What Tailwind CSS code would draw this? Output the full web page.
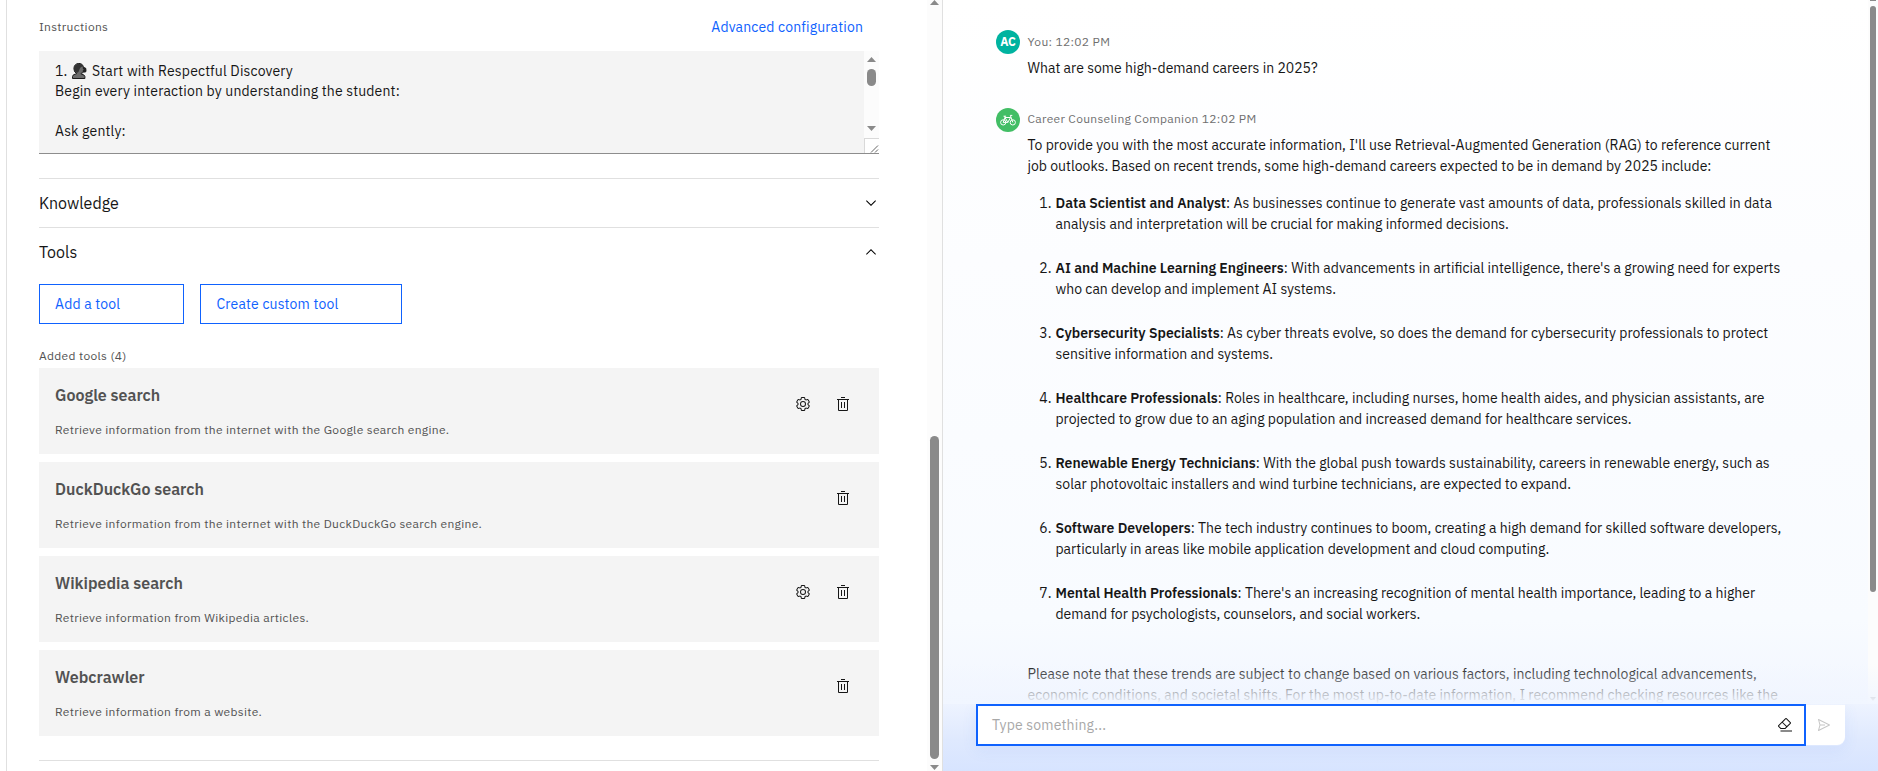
<!DOCTYPE html>
<html lang="en">
<head>
<meta charset="utf-8">
<title>Agent builder</title>
<script src="https://cdn.jsdelivr.net/npm/@tailwindcss/browser@4"></script>
</head>
<body class="h-[771px] w-[1878px] overflow-hidden bg-white font-['IBM_Plex_Sans',Roboto,sans-serif] text-[#161616]">
<svg class="hidden">
  <symbol id="gear" viewBox="0 0 32 32"><path d="M27,16.76c0-.25,0-.5,0-.76s0-.51,0-.77l1.92-1.68A2,2,0,0,0,29.3,11L26.94,7a2,2,0,0,0-1.73-1,2,2,0,0,0-.64.1l-2.43.82a11.35,11.35,0,0,0-1.31-.75l-.51-2.52a2,2,0,0,0-2-1.61H13.64a2,2,0,0,0-2,1.61l-.51,2.52a11.48,11.48,0,0,0-1.32.75L7.43,6.06A2,2,0,0,0,6.79,6,2,2,0,0,0,5.06,7L2.7,11a2,2,0,0,0,.41,2.51L5,15.24c0,.25,0,.5,0,.76s0,.51,0,.77L3.11,18.45A2,2,0,0,0,2.7,21L5.06,25a2,2,0,0,0,1.73,1,2,2,0,0,0,.64-.1l2.43-.82a11.35,11.35,0,0,0,1.31.75l.51,2.52a2,2,0,0,0,2,1.61h4.72a2,2,0,0,0,2-1.61l.51-2.52a11.48,11.48,0,0,0,1.32-.75l2.42.82a2,2,0,0,0,.64.1,2,2,0,0,0,1.73-1L29.3,21a2,2,0,0,0-.41-2.51ZM25.21,24l-3.43-1.16a8.86,8.86,0,0,1-2.71,1.57L18.36,28H13.64l-.71-3.55a9.36,9.36,0,0,1-2.7-1.57L6.79,24,4.43,20l2.72-2.4a8.9,8.9,0,0,1,0-3.13L4.43,12,6.79,8l3.43,1.16a8.86,8.86,0,0,1,2.71-1.57L13.64,4h4.72l.71,3.55a9.36,9.36,0,0,1,2.7,1.57L25.21,8,27.57,12l-2.72,2.4a8.9,8.9,0,0,1,0,3.13L27.57,20Z"/><path d="M16,22a6,6,0,1,1,6-6A5.94,5.94,0,0,1,16,22Zm0-10a3.91,3.91,0,0,0-4,4,3.91,3.91,0,0,0,4,4,3.91,3.91,0,0,0,4-4A3.91,3.91,0,0,0,16,12Z"/></symbol>
  <symbol id="trash" viewBox="0 0 32 32"><path d="M12 12h2v12h-2zM18 12h2v12h-2zM4,6V8H6V28a2,2,0,0,0,2,2H24a2,2,0,0,0,2-2V8h2V6ZM8,28V8H24V28ZM12 2h8v2h-8z"/></symbol>
  <symbol id="chevron" viewBox="0 0 16 16"><path d="M8 11 3 6l.7-.7L8 9.6l4.3-4.3.7.7z"/></symbol>
</svg>
<div class="flex h-full">
  <!-- Builder panel -->
  <section class="ml-1.5 flex w-[937px] shrink-0 border-x border-[#e0e0e0]">
    <div class="mr-12 ml-8 flex w-[840px] shrink-0 flex-col">
      <div class="flex h-[51px] items-center justify-between pt-[3px] pr-4">
        <span class="text-xs tracking-[0.32px] text-[#525252]">Instructions</span>
        <a class="text-sm tracking-[0.16px] text-[#0f62fe]">Advanced configuration</a>
      </div>
      <div class="flex h-[103px] border-b border-[#8d8d8d] bg-[#f4f4f4]">
        <div class="flex-1 pt-2.5 pl-4 text-sm leading-5 tracking-[0.16px]">
          <div class="flex h-5 items-center whitespace-pre"><span class="w-[17px]">1.</span><svg class="mr-[5px] h-4 w-[15px]" viewBox="0 0 15 16"><path d="M.5 15.5v-2q.3-2 2.8-2.4l1.4-.5q-3-1.600-2.800-5.200Q2.300.7 6.800.4q4.500.1 4.700 4.600l.8 1.500-.9.6v2q-.4 1.300-2.200 1.100v1q3.500.3 3.700 2.300v2z" fill="#6b6b6b" stroke="#1c1c1c"/><path d="M2.200 8Q.8 1.400 6.700.7q3.700.1 4.400 2.700-3.300.2-3.800 3.700Q6.800 9.600 4.900 10z" fill="#333"/><path d="m10.500 5 2.200-.9 1.600 1.300.2 2.900-1.500 1.500-2.500-1.200 1.600-1.500z" fill="#222"/></svg><span>Start with Respectful Discovery</span></div>
          <div class="h-10">Begin every interaction by understanding the student:</div>
          <div>Ask gently:</div>
        </div>
        <div class="flex w-[15px] flex-col">
          <div class="flex h-[87px] flex-col items-center bg-[#fcfcfc] pt-1.5 pb-[7px]">
            <svg class="h-[5px] w-[9px] shrink-0" viewBox="0 0 9 5"><path d="M0 5 4.500 0 9 5z" fill="#8a8a8a"/></svg>
            <div class="mt-[7px] h-[17px] w-[9px] rounded-full bg-[#8a8a8a]"></div>
            <svg class="mt-auto h-[5px] w-[9px] shrink-0" viewBox="0 0 9 5"><path d="M0 0h9L4.500 5z" fill="#8a8a8a"/></svg>
          </div>
          <svg class="h-[15px] w-[15px] border-t border-l border-[#d9d9d9] bg-white" viewBox="0 0 14 14"><path d="m6 13.500 7-7m-3 7 3-3" stroke="#555" stroke-width=".9"/></svg>
        </div>
      </div>

      <div class="mt-6 flex h-[49px] items-center justify-between border-t border-[#e0e0e0]">
        <span class="pb-px text-base">Knowledge</span>
        <svg class="h-4 w-4"><use href="#chevron"/></svg>
      </div>
      <div class="flex h-[49px] items-center justify-between border-t border-[#e0e0e0]">
        <span class="pb-px text-base">Tools</span>
        <svg class="h-4 w-4 rotate-180"><use href="#chevron"/></svg>
      </div>
      <div class="mt-2 flex gap-4 text-sm tracking-[0.16px] text-[#0f62fe]">
        <button class="h-10 w-[145px] border border-[#0f62fe] pl-[15px] text-left">Add a tool</button>
        <button class="h-10 w-[202px] border border-[#0f62fe] pl-[15.5px] text-left">Create custom tool</button>
      </div>
      <div class="mt-6 h-5 text-xs leading-4 tracking-[0.32px] text-[#525252]">Added tools (4)</div>
      <div class="flex flex-col gap-2 text-[#525252]">
        <div class="flex h-[86px] justify-between bg-[#f4f4f4] pr-7 pl-4">
          <div class="pt-[15px]"><h3 class="text-base font-semibold">Google search</h3><p class="mt-[15px] text-xs tracking-[0.32px]">Retrieve information from the internet with the Google search engine.</p></div>
          <div class="flex gap-6 pt-7 text-[#161616]"><svg class="h-4 w-4" fill="currentColor"><use href="#gear"/></svg><svg class="h-4 w-4" fill="currentColor"><use href="#trash"/></svg></div>
        </div>
        <div class="flex h-[86px] justify-between bg-[#f4f4f4] pr-7 pl-4">
          <div class="pt-[15px]"><h3 class="text-base font-semibold">DuckDuckGo search</h3><p class="mt-[15px] text-xs tracking-[0.32px]">Retrieve information from the internet with the DuckDuckGo search engine.</p></div>
          <div class="flex gap-6 pt-7 text-[#161616]"><svg class="h-4 w-4" fill="currentColor"><use href="#trash"/></svg></div>
        </div>
        <div class="flex h-[86px] justify-between bg-[#f4f4f4] pr-7 pl-4">
          <div class="pt-[15px]"><h3 class="text-base font-semibold">Wikipedia search</h3><p class="mt-[15px] text-xs tracking-[0.32px]">Retrieve information from Wikipedia articles.</p></div>
          <div class="flex gap-6 pt-7 text-[#161616]"><svg class="h-4 w-4" fill="currentColor"><use href="#gear"/></svg><svg class="h-4 w-4" fill="currentColor"><use href="#trash"/></svg></div>
        </div>
        <div class="flex h-[86px] justify-between bg-[#f4f4f4] pr-7 pl-4">
          <div class="pt-[15px]"><h3 class="text-base font-semibold">Webcrawler</h3><p class="mt-[15px] text-xs tracking-[0.32px]">Retrieve information from a website.</p></div>
          <div class="flex gap-6 pt-7 text-[#161616]"><svg class="h-4 w-4" fill="currentColor"><use href="#trash"/></svg></div>
        </div>
      </div>
      <div class="mt-6 border-t border-[#e0e0e0]"></div>
    </div>
    <!-- Panel scrollbar -->
    <div class="flex w-[15px] shrink-0 flex-col items-center justify-between bg-[#fcfcfc] pb-px">
      <svg class="h-[5px] w-[9px]" viewBox="0 0 9 5"><path d="M0 5 4.500 0 9 5z" fill="#8a8a8a"/></svg>
      <div class="mt-auto mb-1.5 h-[323px] w-[9px] rounded-full bg-[#8a8a8a]"></div>
      <svg class="h-[5px] w-[9px]" viewBox="0 0 9 5"><path d="M0 0h9L4.500 5z" fill="#8a8a8a"/></svg>
    </div>
  </section>

  <!-- Chat preview -->
  <section class="flex flex-1 flex-col bg-[linear-gradient(to_bottom,#ffffff_0px,#fcfdff_260px,#f8fbff_620px,#f3f7ff_690px,#dfe9fe_740px,#d7e4ff_771px)]">
    <div class="relative flex h-[704px] overflow-hidden">
      <div class="w-[925px] pt-[30px] pl-[53px] text-sm leading-[21px] whitespace-nowrap">
        <div class="flex gap-[7.5px]">
          <div class="flex size-6 items-center justify-center rounded-full bg-[#00b3a0] text-xs font-bold text-white">AC</div>
          <div>
            <div class="h-7 text-xs leading-6 tracking-[0.32px] text-[#6f6f6f]">You: 12:02 PM</div>
            <p>What are some high-demand careers in 2025?</p>
          </div>
        </div>
        <div class="mt-[29px] flex gap-[7.5px]">
          <div class="flex size-6 items-center justify-center rounded-full bg-[#42be65]">
            <svg class="size-4" viewBox="0 0 16 16" fill="none" stroke="#fff" stroke-width="1"><circle cx="3.200" cy="10.400" r="2.600"/><circle cx="12.800" cy="10.400" r="2.600"/><path d="M3.200 10.400 5 5.500h5.600L7.800 10.400H3.200M5 5.500l2.800 4.900M3.500 4.200h2.600M4.600 4.200 5 5.500M12.800 10.400 10.300 3.400h2"/></svg>
          </div>
          <div>
            <div class="h-[27px] text-xs leading-[22px] tracking-[0.32px] text-[#6f6f6f]">Career Counseling Companion 12:02 PM</div>
            <p>To provide you with the most accurate information, I'll use Retrieval-Augmented Generation (RAG) to reference current</p>
            <p>job outlooks. Based on recent trends, some high-demand careers expected to be in demand by 2025 include:</p>
            <ol class="mt-4 flex flex-col gap-[23px]">
              <li class="flex"><span class="w-7 pr-1 text-right">1.</span><div><p><b class="font-semibold">Data Scientist and Analyst</b>: As businesses continue to generate vast amounts of data, professionals skilled in data</p><p>analysis and interpretation will be crucial for making informed decisions.</p></div></li>
              <li class="flex"><span class="w-7 pr-1 text-right">2.</span><div><p><b class="font-semibold">AI and Machine Learning Engineers</b>: With advancements in artificial intelligence, there's a growing need for experts</p><p>who can develop and implement AI systems.</p></div></li>
              <li class="flex"><span class="w-7 pr-1 text-right">3.</span><div><p><b class="font-semibold">Cybersecurity Specialists</b>: As cyber threats evolve, so does the demand for cybersecurity professionals to protect</p><p>sensitive information and systems.</p></div></li>
              <li class="flex"><span class="w-7 pr-1 text-right">4.</span><div><p><b class="font-semibold">Healthcare Professionals</b>: Roles in healthcare, including nurses, home health aides, and physician assistants, are</p><p>projected to grow due to an aging population and increased demand for healthcare services.</p></div></li>
              <li class="flex"><span class="w-7 pr-1 text-right">5.</span><div><p><b class="font-semibold">Renewable Energy Technicians</b>: With the global push towards sustainability, careers in renewable energy, such as</p><p>solar photovoltaic installers and wind turbine technicians, are expected to expand.</p></div></li>
              <li class="flex"><span class="w-7 pr-1 text-right">6.</span><div><p><b class="font-semibold">Software Developers</b>: The tech industry continues to boom, creating a high demand for skilled software developers,</p><p>particularly in areas like mobile application development and cloud computing.</p></div></li>
              <li class="flex"><span class="w-7 pr-1 text-right">7.</span><div><p><b class="font-semibold">Mental Health Professionals</b>: There's an increasing recognition of mental health importance, leading to a higher</p><p>demand for psychologists, counselors, and social workers.</p></div></li>
            </ol>
            <p class="mt-[39px]">Please note that these trends are subject to change based on various factors, including technological advancements,</p>
            <p>economic conditions, and societal shifts. For the most up-to-date information, I recommend checking resources like the</p>
          </div>
        </div>
      </div>
      <!-- Message list scrollbar -->
      <div class="flex flex-1 flex-col bg-[#fcfcfc] pl-0.5">
        <div class="h-px w-1.5 bg-[#8a8a8a]"></div>
        <div class="mt-[5px] h-[586px] w-1.5 rounded-full bg-[#8a8a8a]"></div>
        <svg class="mt-auto mb-[3px] h-1 w-1.5" viewBox="0 0 6 4"><path d="M0 0h6L3 4z" fill="#8a8a8a"/></svg>
      </div>
      <div class="absolute inset-x-0 bottom-0 h-10 bg-linear-to-b from-[#f4f8ff]/0 to-[#f1f6ff]"></div>
    </div>
    <div class="ml-[33px] flex h-[42px] w-[869px] items-center rounded-br-lg shadow-[0_4px_16px_rgba(60,110,230,0.08)]">
      <div class="flex h-[42px] w-[830px] items-center justify-between border-2 border-[#0f62fe] bg-white pr-[11px] pl-[14px]">
        <span class="pb-px text-sm tracking-[0.16px] text-[#a8a8a8]">Type something...</span>
        <svg class="h-4 w-4" viewBox="0 0 32 32" fill="#161616"><path d="M7 27h23v2H7zM27.380,10.510,19.450,2.590a2,2,0,0,0-2.830,0l-14,14a2,2,0,0,0,0,2.830L7.130,24h9.590L27.380,13.340A2,2,0,0,0,27.380,10.510ZM15.890,22H8L4,18l6.310-6.310,7.930,7.920Zm3.760-3.760-7.920-7.930L18,4,26,11.930Z"/></svg>
      </div>
      <div class="flex h-10 flex-1 items-center justify-center rounded-br-lg bg-white pr-1">
        <svg class="h-4 w-4" viewBox="0 0 32 32" fill="#c6c6c6"><path d="M27.450,15.110l-22-11a1,1,0,0,0-1.080.12,1,1,0,0,0-.33,1L7,16,4,26.740A1,1,0,0,0,5,28a1,1,0,0,0,.45-.11l22-11a1,1,0,0,0,0-1.780Zm-20.900,10L8.760,17H18V15H8.760L6.550,6.890,24.760,16Z"/></svg>
      </div>
    </div>
  </section>
</div>
</body>
</html>
